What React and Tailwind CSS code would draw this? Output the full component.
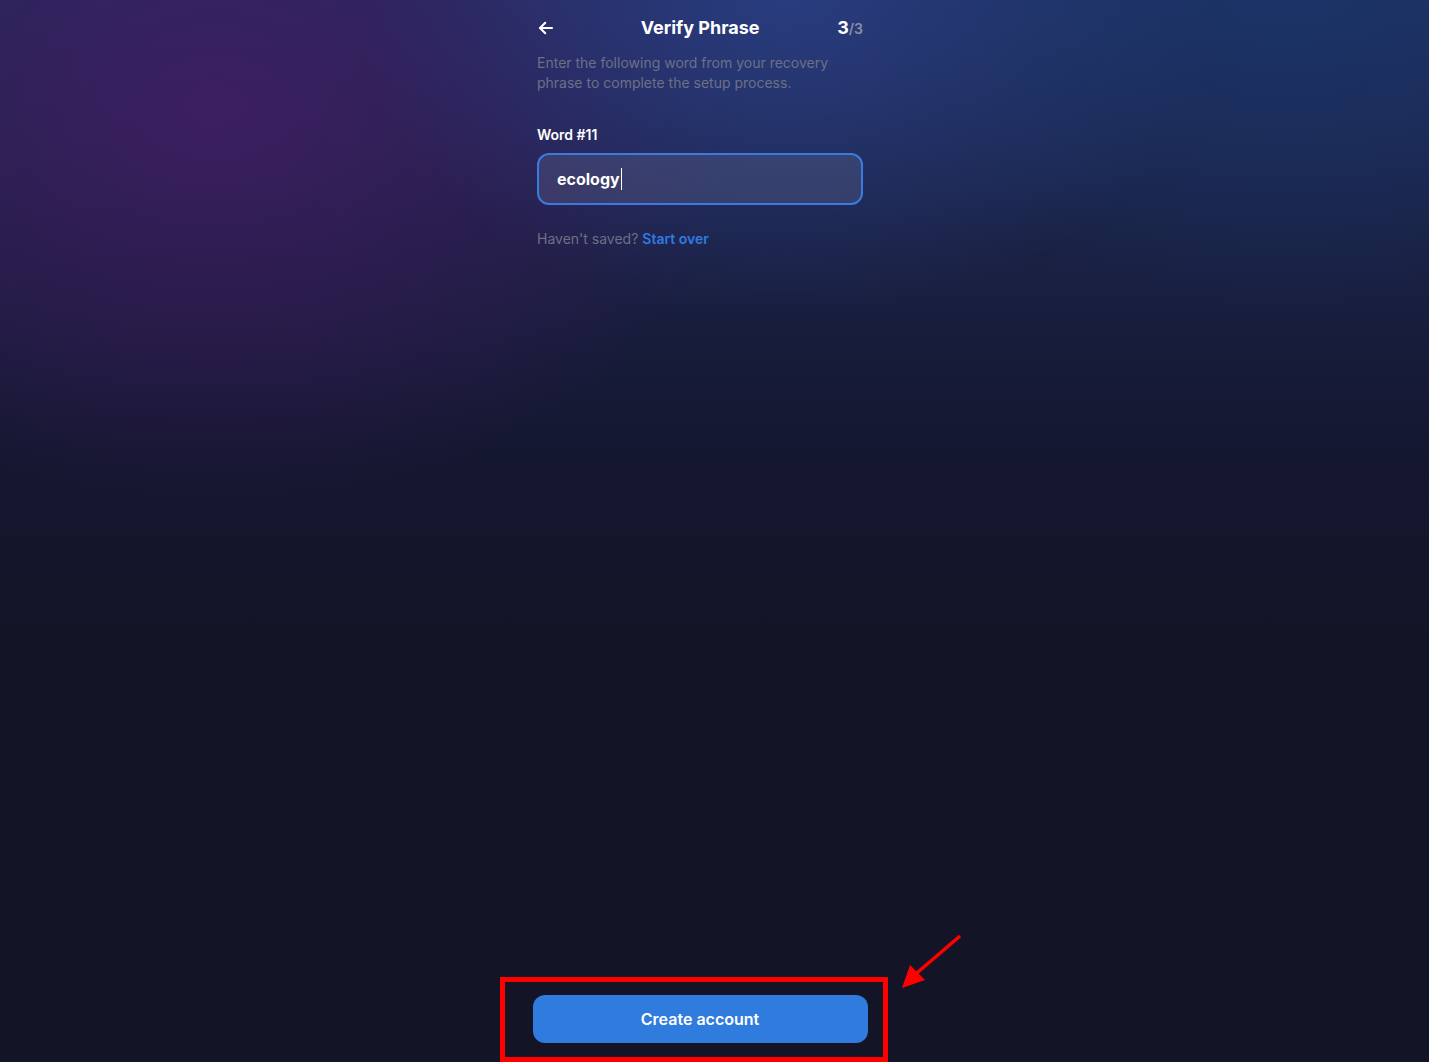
import React from "react";

export default function App() {
  return (
    <div
      className="relative w-full h-[1062px] overflow-hidden bg-[#131527] font-['Inter',sans-serif]"
    >
      <div className="absolute inset-0 bg-[linear-gradient(to_bottom,#1f2f5e_0%,#1a2245_22%,#141730_42%,#131527_60%)]" />
      <div className="absolute inset-0 bg-[radial-gradient(ellipse_38%_38%_at_15%_10%,rgba(68,28,100,0.8)_0%,rgba(60,25,90,0.5)_50%,transparent_100%)]" />
      <div className="absolute inset-0 bg-[radial-gradient(ellipse_30%_30%_at_55%_0%,rgba(45,65,140,0.7)_0%,transparent_100%)]" />
      <div className="absolute inset-0 bg-[radial-gradient(ellipse_30%_30%_at_90%_0%,rgba(25,55,110,0.6)_0%,transparent_100%)]" />

      <div className="relative w-[1400px] h-full flex flex-col items-center">
        <div className="w-[326px] flex flex-col pt-[16px]">
          <div className="flex items-center justify-between h-[24px]">
            <svg width="18" height="18" viewBox="0 0 24 24" fill="none" stroke="white" strokeWidth="2.8" strokeLinecap="round" strokeLinejoin="round">
              <path d="M20 12H4" />
              <path d="M11 5l-7 7 7 7" />
            </svg>
            <div className="text-white text-[18px] font-bold leading-[24px] pl-[8px]">Verify Phrase</div>
            <div className="leading-[24px]">
              <span className="text-white text-[18px] font-bold">3</span>
              <span className="text-[#8b8fa3] text-[14px] font-semibold">/3</span>
            </div>
          </div>
          <p className="mt-[13px] text-[14px] leading-[20px] text-[#6c7086]">
            Enter the following word from your recovery phrase to complete the setup process.
          </p>
          <div className="mt-[32px] text-white text-[14px] font-semibold leading-[20px]">Word #11</div>
          <div className="mt-[8px] h-[52px] rounded-[12px] border-2 border-[#3a7be0] bg-[rgba(120,125,160,0.25)] flex items-center px-[18px]">
            <span className="text-white text-[16px] font-bold">ecology</span>
            <span className="w-[1px] h-[22px] bg-white ml-[1px]" />
          </div>
          <div className="mt-[24px] text-[14px] leading-[20px]">
            <span className="text-[#6c7086]">Haven't saved? </span>
            <span className="text-[#2f7be0] font-semibold">Start over</span>
          </div>
        </div>

        <div className="mt-auto mb-[19px] w-[335px] h-[48px] rounded-[12px] bg-[#2f7bde] flex items-center justify-center text-white text-[16px] font-semibold">
          Create account
        </div>
      </div>

      <div className="absolute left-[500px] top-[977px] w-[388px] h-[85px] border-[5px] border-[#ff0000]" />
      <svg className="absolute left-[895px] top-[930px]" width="72" height="65" viewBox="0 0 72 65">
        <line x1="65" y1="6" x2="16" y2="48" stroke="#ff0000" strokeWidth="3.5" />
        <polygon points="7,58 15,35 30,50" fill="#ff0000" />
      </svg>
    </div>
  );
}
